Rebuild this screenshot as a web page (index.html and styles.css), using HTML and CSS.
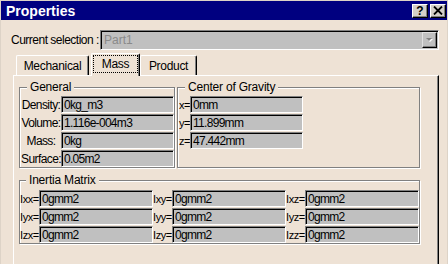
FILE: index.html
```html
<!DOCTYPE html>
<html lang="en">
<head>
  <meta charset="UTF-8">
  <title>Properties</title>
  <link rel="stylesheet" href="styles.css">
</head>
<body>
  <div class="window">
    <div class="titlebar">
      <span class="title">Properties</span>
      <span class="tbtn help">?</span>
      <span class="tbtn close">
        <svg width="10" height="9" viewBox="0 0 10 9"><path d="M1 0.5 L9 8.5 M9 0.5 L1 8.5" stroke="#000" stroke-width="1.8"/></svg>
      </span>
    </div>

    <div class="selection">
      <span class="sel-label">Current selection :</span>
      <div class="combo">
        <span class="combo-text">Part1</span>
        <span class="combo-btn">
          <svg width="7" height="5" viewBox="0 0 7 5"><path d="M1 1 H7 L4 4 Z" fill="#fff"/><path d="M0 0 H6 L3 3 Z" fill="#808080"/></svg>
        </span>
      </div>
    </div>

    <div class="tabs">
      <div class="tab">Mechanical</div>
      <div class="tab active"><span class="focus">Mass</span></div>
      <div class="tab">Product</div>
    </div>

    <div class="panel">
      <div class="top-groups">
        <fieldset class="group general">
          <legend>General</legend>
          <div class="grid general-grid">
            <span class="lbl">Density:</span><div class="field">0kg_m3</div>
            <span class="lbl">Volume:</span><div class="field">1.116e-004m3</div>
            <span class="lbl">Mass:</span><div class="field">0kg</div>
            <span class="lbl">Surface:</span><div class="field">0.05m2</div>
          </div>
        </fieldset>
        <fieldset class="group gravity">
          <legend>Center of Gravity</legend>
          <div class="grid gravity-grid">
            <span class="lbl">x=</span><div class="field">0mm</div>
            <span class="lbl">y=</span><div class="field">11.899mm</div>
            <span class="lbl">z=</span><div class="field">47.442mm</div>
          </div>
        </fieldset>
      </div>

      <fieldset class="group inertia">
        <legend>Inertia Matrix</legend>
        <div class="grid inertia-grid">
          <span class="lbl">Ixx=</span><div class="field">0gmm2</div>
          <span class="lbl">Ixy=</span><div class="field">0gmm2</div>
          <span class="lbl">Ixz=</span><div class="field">0gmm2</div>
          <span class="lbl">Iyx=</span><div class="field">0gmm2</div>
          <span class="lbl">Iyy=</span><div class="field">0gmm2</div>
          <span class="lbl">Iyz=</span><div class="field">0gmm2</div>
          <span class="lbl">Izx=</span><div class="field">0gmm2</div>
          <span class="lbl">Izy=</span><div class="field">0gmm2</div>
          <span class="lbl">Izz=</span><div class="field">0gmm2</div>
        </div>
      </fieldset>
    </div>
  </div>
</body>
</html>
```

FILE: styles.css
```css
body {
  margin: 0;
  font-family: "Liberation Sans", Arial, sans-serif;
  font-size: 11px;
  color: #000;
  background: #eee2d5;
}

.window {
  width: 448px;
  height: 264px;
  overflow: hidden;
  box-sizing: border-box;
  border-left: 1px solid #ddd3c7;
  border-right: 1px solid #ddd3c7;
  border-top: 1px solid #ddd3c7;
}

/* title bar */
.titlebar {
  height: 19px;
  background: #000080;
  color: #fff;
  display: flex;
  align-items: center;
  padding: 0 1px 0 5px;
}

.title {
  flex: 1;
  font-weight: bold;
  font-size: 14px;
}

.tbtn {
  width: 16px;
  height: 14px;
  box-sizing: border-box;
  margin-left: 2px;
  background: #d4d0c8;
  border: 1px solid;
  border-color: #fff #000 #000 #fff;
  box-shadow: inset -1px -1px 0 #808080;
  color: #000;
  font-weight: bold;
  font-size: 12px;
  line-height: 12px;
  display: flex;
  align-items: center;
  justify-content: center;
}

/* current selection */
.selection {
  display: flex;
  align-items: center;
  margin-top: 10px;
  padding-left: 10px;
}

.sel-label {
  width: 89px;
  font-size: 12px;
  letter-spacing: -0.5px;
}

.combo {
  width: 339px;
  height: 20px;
  box-sizing: border-box;
  display: flex;
  align-items: center;
  background: #c0c0c0;
  border: 1px solid;
  border-color: #808080 #fff #fff #808080;
  box-shadow: inset 1px 1px 0 #000;
}

.combo-text {
  flex: 1;
  padding-left: 3px;
  font-size: 12px;
  color: #8a8a8a;
}

.combo-btn {
  width: 15px;
  height: 16px;
  box-sizing: border-box;
  margin-right: 1px;
  display: flex;
  align-items: center;
  justify-content: center;
  background: #c0c0c0;
  border: 1px solid;
  border-color: #e0e0e0 #000 #000 #e0e0e0;
  box-shadow: inset -1px -1px 0 #808080;
}

/* tabs */
.tabs {
  display: flex;
  align-items: flex-end;
  height: 22px;
  margin-top: 3px;
  padding-left: 15px;
}

.tab {
  height: 20px;
  box-sizing: border-box;
  padding: 0 10px;
  display: flex;
  align-items: center;
  justify-content: center;
  border-top: 1px solid #fff;
  border-left: 1px solid #fff;
  border-right: 1px solid #000;
  border-radius: 2px 2px 0 0;
  box-shadow: inset -1px 0 0 #808080;
  font-size: 12px;
  letter-spacing: -0.3px;
}

.tab:first-child {
  width: 73px;
}

.tab + .tab {
  margin-left: 2px;
}

.tab.active {
  position: relative;
  z-index: 1;
  width: 49px;
  height: 23px;
  margin-bottom: -1px;
  padding: 0 1px 3px;
  background: #eee2d5;
}

.tab.active + .tab {
  margin-left: 0;
  width: 57px;
}

.focus {
  flex: 1;
  align-self: stretch;
  margin-top: 1px;
  display: flex;
  align-items: center;
  justify-content: center;
  border: 1px dotted #000;
}

/* panel */
.panel {
  margin-left: 12px;
  width: 426px;
  height: 200px;
  box-sizing: border-box;
  border-top: 1px solid #fff;
  border-left: 1px solid #fff;
  border-right: 1px solid #000;
  box-shadow: inset -1px 0 0 #808080;
  padding: 4px 0 0 5px;
}

.top-groups {
  display: flex;
  gap: 2px;
}

.group {
  margin: 0;
  padding: 0;
  min-inline-size: 0;
  border: 1px solid #808080;
  box-shadow: inset 1px 1px 0 #fff, 1px 1px 0 #fff;
}

.group legend {
  margin-left: 6px;
  padding: 0 3px;
  font-size: 12px;
  line-height: 14px;
  letter-spacing: -0.2px;
  background: #eee2d5;
}

.general {
  width: 156px;
  box-sizing: border-box;
  padding: 2px 0 0 1px;
}

.gravity {
  width: 243px;
  box-sizing: border-box;
  padding: 2px 0 0 1px;
}

.inertia {
  width: 401px;
  box-sizing: border-box;
  margin-top: 5px;
  padding: 3px 0 0 0;
}

.grid {
  display: grid;
  row-gap: 1px;
  align-items: center;
}

.general-grid {
  grid-template-columns: 40px 113px;
}

.gravity-grid {
  grid-template-columns: 11px 113px;
}

.inertia-grid {
  grid-template-columns: 19px 114px 19px 114px 19px 114px;
}

.lbl {
  font-size: 11px;
  letter-spacing: -0.4px;
  white-space: nowrap;
}

.general-grid .lbl {
  font-size: 12px;
  letter-spacing: -0.6px;
  text-align: center;
}

.field {
  height: 17px;
  box-sizing: border-box;
  padding-left: 2px;
  display: flex;
  align-items: center;
  background: #c0c0c0;
  border: 1px solid;
  border-color: #808080 #fff #fff #808080;
  box-shadow: inset 1px 1px 0 #000;
  font-size: 12px;
  letter-spacing: -0.7px;
  white-space: nowrap;
}
```
